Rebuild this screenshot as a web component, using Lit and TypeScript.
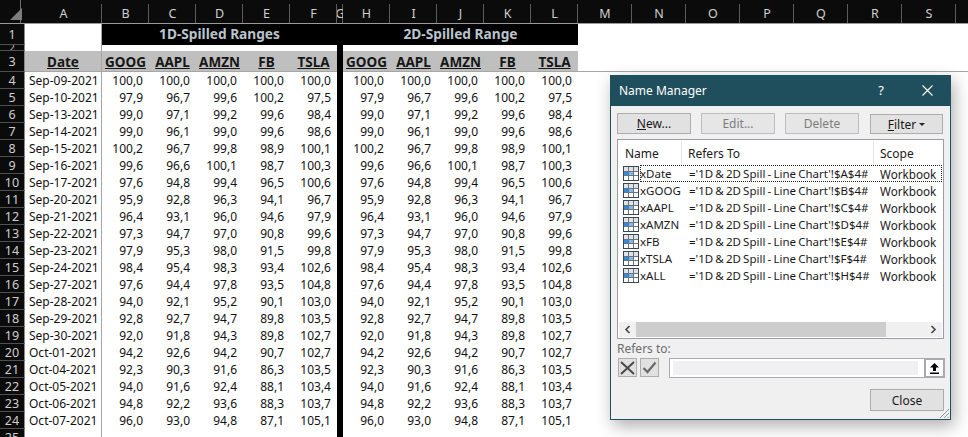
import { LitElement, html, css, svg } from "lit";
import { customElement } from "lit/decorators.js";

const DATA: [string, string[]][] = [
  ["Sep-09-2021", ["100,0", "100,0", "100,0", "100,0", "100,0"]],
  ["Sep-10-2021", ["97,9", "96,7", "99,6", "100,2", "97,5"]],
  ["Sep-13-2021", ["99,0", "97,1", "99,2", "99,6", "98,4"]],
  ["Sep-14-2021", ["99,0", "96,1", "99,0", "99,6", "98,6"]],
  ["Sep-15-2021", ["100,2", "96,7", "99,8", "98,9", "100,1"]],
  ["Sep-16-2021", ["99,6", "96,6", "100,1", "98,7", "100,3"]],
  ["Sep-17-2021", ["97,6", "94,8", "99,4", "96,5", "100,6"]],
  ["Sep-20-2021", ["95,9", "92,8", "96,3", "94,1", "96,7"]],
  ["Sep-21-2021", ["96,4", "93,1", "96,0", "94,6", "97,9"]],
  ["Sep-22-2021", ["97,3", "94,7", "97,0", "90,8", "99,6"]],
  ["Sep-23-2021", ["97,9", "95,3", "98,0", "91,5", "99,8"]],
  ["Sep-24-2021", ["98,4", "95,4", "98,3", "93,4", "102,6"]],
  ["Sep-27-2021", ["97,6", "94,4", "97,8", "93,5", "104,8"]],
  ["Sep-28-2021", ["94,0", "92,1", "95,2", "90,1", "103,0"]],
  ["Sep-29-2021", ["92,8", "92,7", "94,7", "89,8", "103,5"]],
  ["Sep-30-2021", ["92,0", "91,8", "94,3", "89,8", "102,7"]],
  ["Oct-01-2021", ["94,2", "92,6", "94,2", "90,7", "102,7"]],
  ["Oct-04-2021", ["92,3", "90,3", "91,6", "86,3", "103,5"]],
  ["Oct-05-2021", ["94,0", "91,6", "92,4", "88,1", "103,4"]],
  ["Oct-06-2021", ["94,8", "92,2", "93,6", "88,3", "103,7"]],
  ["Oct-07-2021", ["96,0", "93,0", "94,8", "87,1", "105,1"]],
];
const TICKERS = ["GOOG", "AAPL", "AMZN", "FB", "TSLA"];
const COLS = ["A", "B", "C", "D", "E", "F", "G", "H", "I", "J", "K", "L", "M", "N", "O", "P", "Q", "R", "S", "T"];
const NAMES = [
  ["xDate", "A"], ["xGOOG", "B"], ["xAAPL", "C"], ["xAMZN", "D"], ["xFB", "E"], ["xTSLA", "F"], ["xALL", "H"],
];

const gridIcon = () => html`<svg class="gi" width="16" height="15" viewBox="0 0 16 15">
  <rect x="0.5" y="0.5" width="15" height="14" fill="#fff" stroke="#3c4650"/>
  <rect x="1" y="1" width="14" height="4" fill="#dfe3e8"/>
  <rect x="1" y="5" width="5" height="5" fill="#2f8ae0"/>
  <rect x="6" y="5" width="5" height="5" fill="#7fb8ee"/>
  ${svg`<path d="M1 5.500H15M1 9.500H15M5.500 1V14M10.500 1V14" stroke="#6a747e" stroke-width="1" fill="none"/>`}
</svg>`;

@customElement("app-root")
export class AppRoot extends LitElement {
  static styles = css`
    :host {
      display: block;
      position: relative;
      width: 968px;
      height: 437px;
      overflow: hidden;
      background: #fff;
      font-family: "Noto Sans", "Open Sans", sans-serif;
      font-size: 12px;
      color: #111;
    }
    .sheet {
      display: grid;
      grid-template-columns: 25px 77px repeat(5, 47px) 6px repeat(5, 47px) repeat(8, 54px);
      grid-template-rows: 24px 21px 6px 21px repeat(22, 17px);
    }
    .corner, .ch, .rh {
      background: #0b0b0b;
      color: #cfcfcf;
      display: flex;
      align-items: center;
      justify-content: center;
      box-sizing: border-box;
    }
    .corner {
      border-bottom: 1px solid #9a9a9a;
      background: linear-gradient(#6e6e6e, #6e6e6e) right 4px top 0 / 1px 100% no-repeat, #0b0b0b;
      align-items: flex-end;
      justify-content: flex-end;
      padding: 0 3px 3px 0;
    }
    .ch {
      background: linear-gradient(#5c5c5c, #5c5c5c) right bottom / 1px 19px no-repeat, #0b0b0b;
      border-bottom: 1px solid #9a9a9a;
      padding-top: 3px;
      font-size: 12.5px;
      overflow: hidden;
    }
    .rh {
      border-right: 1px solid #8a8a8a;
      border-bottom: 1px solid #4f4f4f;
      font-size: 12.5px;
      overflow: hidden;
    }
    .rh.small { font-size: 9px; align-items: flex-end; line-height: 5px; }
    .c { box-sizing: border-box; min-width: 0; display: flex; align-items: center; }
    .a { border-right: 1px solid #a6a6a6; }
    .date { padding-left: 4px; white-space: nowrap; }
    .num { justify-content: flex-end; padding-right: 6px; }
    .black { background: #000; }
    .title {
      background: #000;
      color: #b9c4cc;
      font-weight: 700;
      font-size: 13.7px;
      justify-content: center;
      padding-bottom: 2px;
    }
    .hd {
      background: #bfbfbf;
      font-weight: 700;
      font-size: 13.5px;
      color: #161616;
      text-decoration: underline;
      justify-content: center;
      border-bottom: 1px solid #a6a6a6;
      padding-top: 1px;
    }
    .line { border-bottom: 1px solid #a6a6a6; }
    .span5 { grid-column: span 5; }
    .span8 { grid-column: span 8; }

    .dialog {
      position: absolute;
      left: 610px;
      top: 75px;
      width: 341px;
      height: 345px;
      box-sizing: border-box;
      background: #f0f0f0;
      border: 1px solid #1f4e5c;
      box-shadow: 3px 6px 16px rgba(0, 0, 0, 0.32);
      display: flex;
      flex-direction: column;
      color: #1a1a1a;
    }
    .tbar {
      box-sizing: border-box;
      height: 30px;
      flex: none;
      background: #1f4e5c;
      color: #fff;
      display: flex;
      align-items: center;
      padding: 0 17px 2px 8px;
      font-size: 12px;
    }
    .tbar .t { flex: 1; }
    .tbar .q { margin-right: 38px; font-size: 13px; }
    .body { flex: 1; display: flex; flex-direction: column; padding: 7px 6px 0 6px; position: relative; }
    .btns { display: flex; height: 21px; margin-bottom: 5px; }
    .btn {
      box-sizing: border-box;
      width: 74px;
      height: 21px;
      border: 1px solid #adadad;
      background: #e1e1e1;
      display: flex;
      align-items: center;
      justify-content: center;
      flex: none;
    }
    .btn.off { color: #7d7d7d; background: #e6e6e6; border-color: #bcbcbc; }
    .btn + .btn { margin-left: 10px; }
    .btn.filter { margin-left: 11px; width: 73px; margin-top: 1px; height: 20px; }
    .caret {
      width: 0; height: 0; margin-left: 3px;
      border-left: 3px solid transparent; border-right: 3px solid transparent; border-top: 3px solid #222;
    }
    u { text-underline-offset: 1px; }
    .list {
      box-sizing: border-box;
      width: 327px;
      height: 200px;
      border: 1px solid #9a9ea3;
      background: #fff;
      display: flex;
      flex-direction: column;
      flex: none;
    }
    .lh, .lr { display: grid; grid-template-columns: 64px 192px 1fr; }
    .lh { height: 24px; flex: none; padding-right: 2px; margin-top: 1px; }
    .lh div { display: flex; align-items: center; padding-left: 7px; border-right: 1px solid #e5e5e5; }
    .lh div + div { padding-left: 6px; }
    .lh div:last-child { border-right: none; }
    .lrows { flex: 1; }
    .lr { height: 17px; align-items: center; white-space: nowrap; position: relative; }
    .nm { display: flex; align-items: center; padding-left: 5px; font-size: 11.5px; }
    .gi { flex: none; margin-right: 1px; }
    .rf { padding-left: 7px; font-size: 11.5px; word-spacing: -0.8px; }
    .sc { padding-left: 6px; font-size: 11.7px; }
    .lr.sel::after {
      content: "";
      position: absolute;
      left: 22px; right: 1px; top: 0; bottom: 0;
      border: 1px dotted #222;
      pointer-events: none;
    }
    .sb {
      height: 15px;
      margin: 0 1px 1px;
      background: #f0f0f0;
      display: flex;
      align-items: center;
      flex: none;
    }
    .arrow { width: 17px; height: 15px; flex: none; display: flex; align-items: center; justify-content: center; }
    .thumb { width: 250px; height: 15px; background: #cdcdcd; flex: none; }
    .sp { flex: 1; }
    .rlabel { color: #6d6d6d; margin-top: 1px; height: 17px; line-height: 17px; }
    .rrow { display: flex; height: 20px; margin-top: 1px; }
    .ib {
      box-sizing: border-box; width: 19px; height: 19px; border: 1px solid #adadad; background: #e1e1e1;
      display: flex; align-items: center; justify-content: center; margin-left: 1px; flex: none;
    }
    .ib + .ib { margin-left: 3px; }
    .inp {
      box-sizing: border-box;
      margin-left: 10px;
      width: 276px;
      height: 20px;
      border: 1px solid #a9a9b0;
      background: #fff;
      display: flex;
      align-items: center;
      padding-left: 3px;
      flex: none;
    }
    .inner { width: 245px; height: 14px; background: #f0f0f0; flex: none; }
    .up {
      box-sizing: border-box; width: 21px; height: 20px; margin-left: auto; margin-right: -1px;
      background: #fff; border: 2px solid #a9a9b0; display: flex; align-items: center; justify-content: center;
    }
    .foot { display: flex; justify-content: flex-end; margin-top: 11px; }
    .foot .btn { height: 22px; }
    .grip { position: absolute; right: 1px; bottom: 1px; }
  `;

  private row(n: number, date: string, vals: string[]) {
    return html`<div class="rh">${n}</div>
      <div class="c a date">${date}</div>
      ${vals.map((v) => html`<div class="c num">${v}</div>`)}
      <div class="black"></div>
      ${vals.map((v) => html`<div class="c num">${v}</div>`)}
      <div class="span8"></div>`;
  }

  render() {
    return html`
      <div class="sheet">
        <div class="corner">
          <svg width="12" height="12" viewBox="0 0 12 12"><path d="M12 0V12H0Z" fill="#7d7d7d"/></svg>
        </div>
        ${COLS.map((c) => html`<div class="ch">${c}</div>`)}

        <div class="rh">1</div>
        <div class="c a"></div>
        <div class="c title span5">1D-Spilled Ranges</div>
        <div class="black"></div>
        <div class="c title span5">2D-Spilled Range</div>
        <div class="span8"></div>

        <div class="rh small">2</div>
        <div class="c a"></div>
        <div class="span5"></div>
        <div class="black"></div>
        <div class="span5"></div>
        <div class="span8"></div>

        <div class="rh">3</div>
        <div class="c hd a">Date</div>
        ${TICKERS.map((t) => html`<div class="c hd">${t}</div>`)}
        <div class="black"></div>
        ${TICKERS.map((t) => html`<div class="c hd">${t}</div>`)}
        <div class="span8 line"></div>

        ${DATA.map(([d, v], i) => this.row(i + 4, d, v))}
        <div class="rh">25</div>
        <div class="c a"></div>
        <div class="span5"></div>
        <div class="black"></div>
      </div>

      <div class="dialog">
        <div class="tbar">
          <span class="t">Name Manager</span>
          <span class="q">?</span>
          <svg width="11" height="11" viewBox="0 0 11 11"><path d="M0.500 0.500L10.500 10.500M10.500 0.500L0.500 10.500" stroke="#fff" stroke-width="1.1"/></svg>
        </div>
        <div class="body">
          <div class="btns">
            <div class="btn"><span><u>N</u>ew...</span></div>
            <div class="btn off">Edit...</div>
            <div class="btn off">Delete</div>
            <div class="btn filter"><span><u>F</u>ilter</span><span class="caret"></span></div>
          </div>
          <div class="list">
            <div class="lh"><div>Name</div><div>Refers To</div><div>Scope</div></div>
            <div class="lrows">
              ${NAMES.map(([n, c], i) => html`<div class="lr ${i === 0 ? "sel" : ""}">
                <div class="nm">${gridIcon()}${n}</div>
                <div class="rf">='1D &amp; 2D Spill - Line Chart'!$${c}$4#</div>
                <div class="sc">Workbook</div>
              </div>`)}
            </div>
            <div class="sb">
              <div class="arrow"><svg width="7" height="9" viewBox="0 0 7 9"><path d="M5.500 1L2 4.500L5.500 8" stroke="#444" stroke-width="1.6" fill="none"/></svg></div>
              <div class="thumb"></div>
              <div class="sp"></div>
              <div class="arrow"><svg width="7" height="9" viewBox="0 0 7 9"><path d="M1.500 1L5 4.500L1.500 8" stroke="#444" stroke-width="1.6" fill="none"/></svg></div>
            </div>
          </div>
          <div class="rlabel">Refers to:</div>
          <div class="rrow">
            <div class="ib"><svg width="15" height="14" viewBox="0 0 15 14"><path d="M1 1L14 13M14 1L1 13" stroke="#4a4a4a" stroke-width="2"/></svg></div>
            <div class="ib"><svg width="15" height="13" viewBox="0 0 15 13"><path d="M1.500 7L5.500 11L13.500 1.500" stroke="#6a6a6a" stroke-width="2.2" fill="none"/></svg></div>
            <div class="inp">
              <div class="inner"></div>
              <div class="up"><svg width="9" height="11" viewBox="0 0 9 11"><path d="M4.500 0L9 4.500H6V8H3V4.500H0ZM0 9.500H9V11H0Z" fill="#000"/></svg></div>
            </div>
          </div>
          <div class="foot"><div class="btn">Close</div></div>
          <svg class="grip" width="10" height="10" viewBox="0 0 10 10"><path d="M10 1L1 10M10 5L5 10M10 8.500L8.500 10" stroke="#9a9a9a" stroke-width="1"/></svg>
        </div>
      </div>
    `;
  }
}
